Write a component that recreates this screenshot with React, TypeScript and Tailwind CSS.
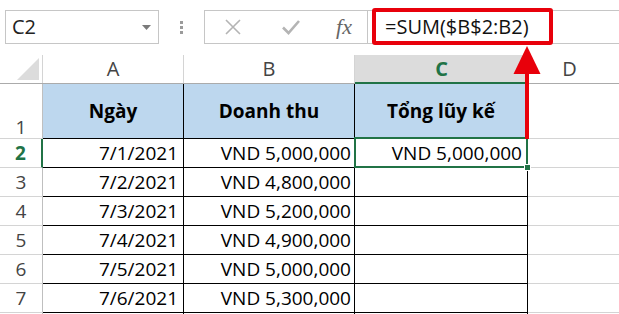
import React from "react";

const font = { fontFamily: '"Open Sans", "Liberation Sans", sans-serif' };

const rows: [string, string][] = [
  ["7/2/2021", "VND 4,800,000"],
  ["7/3/2021", "VND 5,200,000"],
  ["7/4/2021", "VND 4,900,000"],
  ["7/5/2021", "VND 5,000,000"],
  ["7/6/2021", "VND 5,300,000"],
];

function RowHead({ n, green, bottom }: { n: string; green?: boolean; bottom?: boolean }) {
  return (
    <div
      className={`w-[43px] shrink-0 flex justify-center border-b border-b-[#d4d4d4] border-r ${
        green ? "border-r-[#217346] border-r-2 text-[#217346] font-bold" : "border-r-[#bfbfbf] text-[#444]"
      } ${bottom ? "items-end pb-[1px]" : "items-center"}`}
    >
      {n}
    </div>
  );
}

export default function App() {
  return (
    <div className="relative w-[619px] h-[314px] overflow-hidden bg-white text-[19px] leading-none text-black" style={font}>
      {/* Toolbar */}
      <div className="h-[55px] flex items-start pt-[10px]">
        <div className="ml-[5px] w-[154px] h-[34px] border border-[#c6c6c6] flex items-center justify-between pl-[6px] pr-[7px]">
          <span className="text-[20px] text-[#222]">C2</span>
          <svg width="9" height="5" viewBox="0 0 9 5">
            <path d="M0 0 H9 L4.5 5 Z" fill="#7a7a7a" />
          </svg>
        </div>
        <div className="w-[45px] h-[34px] flex flex-col items-center justify-center gap-[2px]">
          <div className="w-[3px] h-[3px] bg-[#9b9b9b]" />
          <div className="w-[3px] h-[3px] bg-[#9b9b9b]" />
          <div className="w-[3px] h-[3px] bg-[#9b9b9b]" />
        </div>
        <div className="flex-1 h-[34px] border-y border-l border-[#c6c6c6] flex items-center">
          <div className="w-[163px] h-full flex items-center border-r border-[#c6c6c6]">
            <div className="w-[56px] flex justify-center">
              <svg width="18" height="18" viewBox="0 0 18 18">
                <path d="M2 2 L16 16 M16 2 L2 16" stroke="#b4b4b4" strokeWidth="1.6" fill="none" />
              </svg>
            </div>
            <div className="w-[60px] flex justify-center">
              <svg width="20" height="18" viewBox="0 0 20 18">
                <path d="M2 9.5 L7.5 15 L18 3" stroke="#b4b4b4" strokeWidth="2.6" fill="none" />
              </svg>
            </div>
            <div className="flex-1 flex justify-center">
              <span
                className="italic text-[22px] text-[#666]"
                style={{ fontFamily: '"Liberation Serif", "DejaVu Serif", serif' }}
              >
                fx
              </span>
            </div>
          </div>
          <div className="pl-[17px] text-[20px] text-[#111]">=SUM($B$2:B2)</div>
        </div>
      </div>

      {/* Column headers */}
      <div className="flex h-[29px] border-b border-[#ababab] text-[#444] text-[20px]">
        <div className="w-[43px] shrink-0 border-r border-[#d4d4d4] relative">
          <svg className="absolute left-[17px] top-[3px]" width="22" height="22" viewBox="0 0 22 22">
            <path d="M22 0 V22 H0 Z" fill="#dcdcdc" />
          </svg>
        </div>
        <div className="w-[141px] shrink-0 border-r border-[#d4d4d4] flex items-center justify-center">A</div>
        <div className="w-[171px] shrink-0 border-r border-[#d4d4d4] flex items-center justify-center">B</div>
        <div className="w-[173px] shrink-0 bg-[#dcdcdc] border-b-2 border-[#217346] -mb-px flex items-center justify-center text-[#217346] font-bold">
          C
        </div>
        <div className="flex-1 flex items-center justify-center pr-[8px]">D</div>
      </div>

      {/* Row 1 */}
      <div className="flex h-[55px]">
        <RowHead n="1" bottom />
        <div className="w-[141px] shrink-0 bg-[#bdd7ee] border-r border-b border-black flex items-center justify-center font-bold">
          Ngày
        </div>
        <div className="w-[171px] shrink-0 bg-[#bdd7ee] border-r border-b border-black flex items-center justify-center font-bold">
          Doanh thu
        </div>
        <div className="w-[173px] shrink-0 bg-[#bdd7ee] border-r border-b border-black flex items-center justify-center font-bold">
          Tổng lũy kế
        </div>
        <div className="flex-1 border-b border-[#d4d4d4]" />
      </div>

      {/* Row 2 */}
      <div className="flex h-[29px]">
        <RowHead n="2" green />
        <div className="w-[141px] shrink-0 border-r border-b border-black flex items-center justify-end pr-[5px]">7/1/2021</div>
        <div className="w-[171px] shrink-0 border-r border-b border-black flex items-center justify-end pr-[3px]">VND 5,000,000</div>
        <div className="relative w-[173px] shrink-0 border-r border-b border-black flex items-center justify-end pr-[5px]">
          VND 5,000,000
          <div className="absolute -left-px -top-[2px] -right-px -bottom-px border-2 border-[#217346]" />
          <div className="absolute -right-[4px] -bottom-[4px] w-[7px] h-[7px] bg-[#217346] border border-white" />
        </div>
        <div className="flex-1 border-b border-[#d4d4d4]" />
      </div>

      {rows.map(([d, v], i) => (
        <div key={d} className="flex h-[29px]">
          <RowHead n={String(i + 3)} />
          <div className="w-[141px] shrink-0 border-r border-b border-black flex items-center justify-end pr-[5px]">{d}</div>
          <div className="w-[171px] shrink-0 border-r border-b border-black flex items-center justify-end pr-[3px]">{v}</div>
          <div className="w-[173px] shrink-0 border-r border-b border-black" />
          <div className="flex-1 border-b border-[#d4d4d4]" />
        </div>
      ))}
      <div className="flex h-[29px]">
        <div className="w-[43px] shrink-0 border-r border-[#bfbfbf]" />
        <div className="w-[141px] shrink-0 border-r border-black" />
        <div className="w-[171px] shrink-0 border-r border-black" />
        <div className="w-[173px] shrink-0 border-r border-black" />
      </div>

      {/* Annotations */}
      <div className="absolute left-[372px] top-[8px] w-[181px] h-[37px] border-[4px] border-[#e8000b] rounded-[3px]" />
      <svg className="absolute left-[512px] top-[46px]" width="30" height="93" viewBox="0 0 30 93">
        <path d="M15 0 L28.5 28 H1.5 Z" fill="#e8000b" />
        <rect x="13" y="27" width="4" height="66" fill="#e8000b" />
      </svg>
    </div>
  );
}
